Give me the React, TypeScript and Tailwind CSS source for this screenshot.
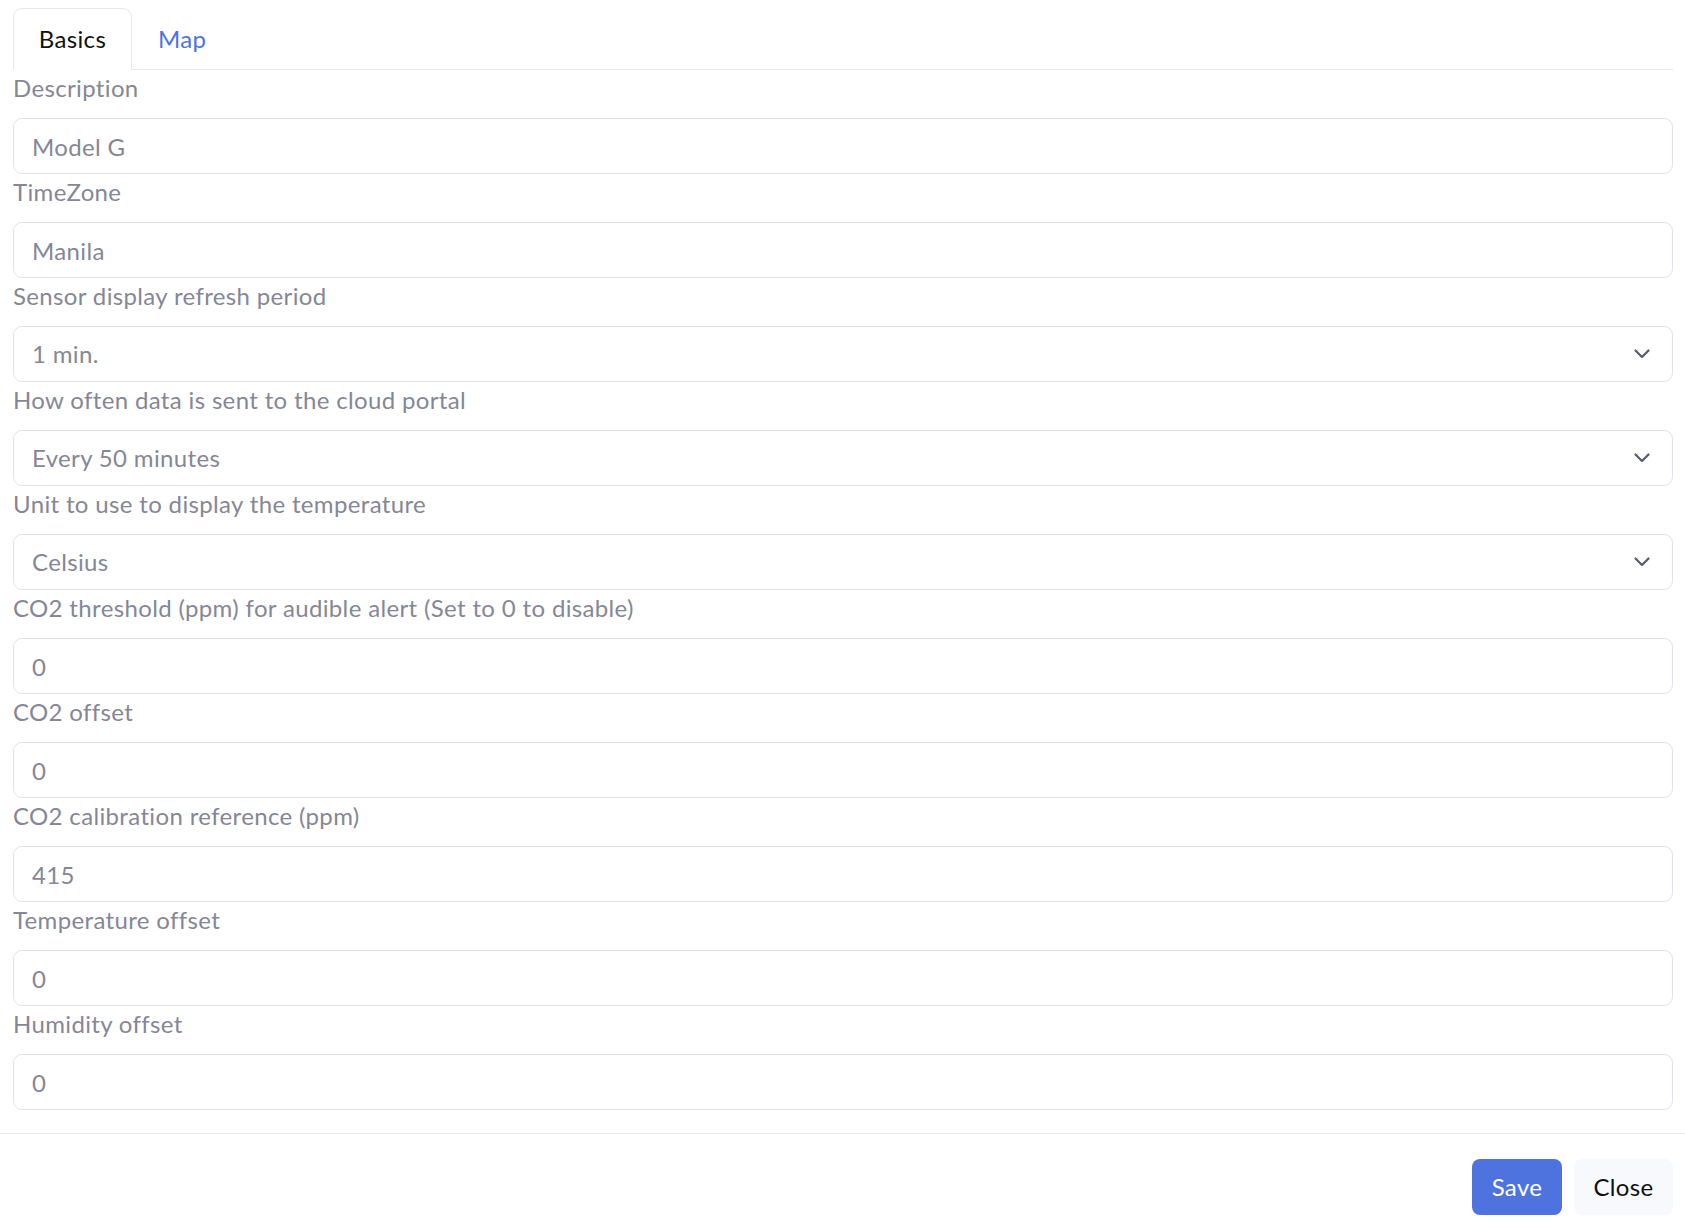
import { useState } from 'react'

const fields = [
    { label: 'Description', value: 'Model G' },
    { label: 'TimeZone', value: 'Manila' },
    { label: 'Sensor display refresh period', value: '1 min.', options: ['30 sec.', '1 min.', '5 min.'] },
    { label: 'How often data is sent to the cloud portal', value: 'Every 50 minutes', options: ['Every 10 minutes', 'Every 30 minutes', 'Every 50 minutes'] },
    { label: 'Unit to use to display the temperature', value: 'Celsius', options: ['Celsius', 'Fahrenheit'] },
    { label: 'CO2 threshold (ppm) for audible alert (Set to 0 to disable)', value: '0' },
    { label: 'CO2 offset', value: '0' },
    { label: 'CO2 calibration reference (ppm)', value: '415' },
    { label: 'Temperature offset', value: '0' },
    { label: 'Humidity offset', value: '0' },
]

const inputClass = "block w-full h-[56px] rounded-[9px] border border-[#e0e1ec] bg-white pl-[18px] pr-[18px] text-[24px] tracking-[0.35px] text-[#858796] outline-none appearance-none"

const App = () => {
    const [tab, setTab] = useState('basics')

    return <div className="min-h-screen bg-white font-['Lato','Noto_Sans',sans-serif] text-[24px] tracking-[0.35px]">
        <div className="px-[13px] pt-[8px] pb-[23px] pr-[12px]">
            <ul className="flex border-b border-[#e3e6f0]">
                <li className="-mb-px">
                    <button onClick={() => setTab('basics')} className="h-[62px] w-[119px] rounded-t-[9px] border border-[#e3e6f0] border-b-white bg-white text-[#111] text-[24px] tracking-[0.35px]">Basics</button>
                </li>
                <li>
                    <button onClick={() => setTab('map')} className="h-[61px] px-[26px] text-[#4e73df] text-[24px] tracking-[0.35px]">Map</button>
                </li>
            </ul>
            {tab === 'basics' && <form className="flex flex-col">
                {fields.map(f => <div key={f.label}>
                    <label className="block h-[36px] leading-[36px] mb-[12px] text-[#858796]">{f.label}</label>
                    {f.options ?
                        <div className="relative">
                            <select defaultValue={f.value} className={inputClass}>
                                {f.options.map(o => <option key={o}>{o}</option>)}
                            </select>
                            <svg className="pointer-events-none absolute right-[23px] top-[23px] h-[10px] w-[16px]" viewBox="0 0 16 10" fill="none" stroke="#5a5c69" strokeWidth="2.2" strokeLinecap="round" strokeLinejoin="round">
                                <path d="M1.5 1.5L8 8L14.5 1.5" />
                            </svg>
                        </div>
                        : <input type="text" defaultValue={f.value} className={inputClass} />}
                </div>)}
            </form>}
        </div>
        <div className="border-t border-[#e3e6f0] flex justify-end gap-[12px] pt-[25px] pb-[10px] pr-[12px]">
            <button className="h-[56px] w-[90px] rounded-[8px] bg-[#4e73df] text-white text-[24px] tracking-[0.35px]">Save</button>
            <button className="h-[56px] w-[99px] rounded-[8px] bg-[#f8f9fc] text-[#111] text-[24px] tracking-[0.35px]">Close</button>
        </div>
    </div>
}

export default App
